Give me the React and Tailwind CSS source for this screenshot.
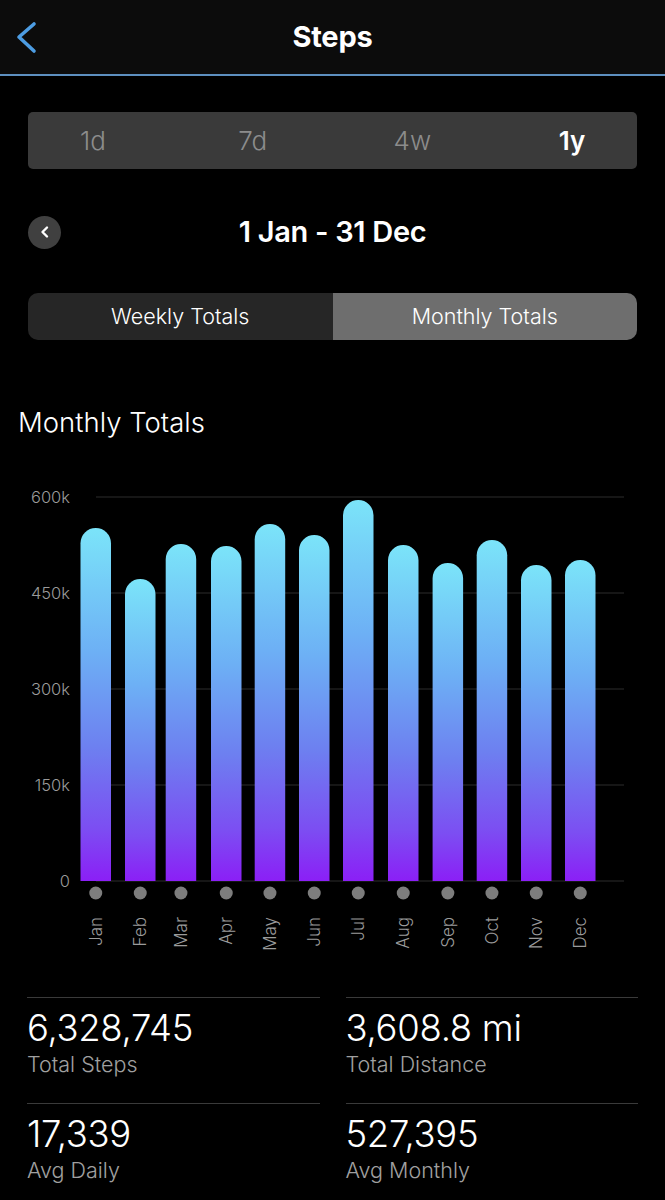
import React from "react";

const months = [
  { m: "Jan", x: 80.5, top: 528 },
  { m: "Feb", x: 125, top: 579 },
  { m: "Mar", x: 165.7, top: 544 },
  { m: "Apr", x: 211, top: 546 },
  { m: "May", x: 254.7, top: 524 },
  { m: "Jun", x: 299, top: 535 },
  { m: "Jul", x: 343, top: 500 },
  { m: "Aug", x: 388, top: 545 },
  { m: "Sep", x: 432.6, top: 563 },
  { m: "Oct", x: 476.7, top: 540 },
  { m: "Nov", x: 521, top: 565 },
  { m: "Dec", x: 565, top: 560 },
];

const OFF = 480;
const BW = 30.5;

function Chart() {
  const grid = [
    { y: 497, l: "600k" },
    { y: 593, l: "450k" },
    { y: 689, l: "300k" },
    { y: 785, l: "150k" },
    { y: 881, l: "0" },
  ];
  const base = 881 - OFF;
  return (
    <svg width="665" height="480" viewBox="0 0 665 480" className="block">
      <defs>
        <linearGradient id="barg" x1="0" y1="0" x2="0" y2="1">
          <stop offset="0" stopColor="#7be4f9" />
          <stop offset="0.35" stopColor="#6db0f5" />
          <stop offset="0.62" stopColor="#6d80f0" />
          <stop offset="0.85" stopColor="#7c4ef2" />
          <stop offset="1" stopColor="#8b1ff6" />
        </linearGradient>
      </defs>
      {grid.map((g) => (
        <g key={g.l}>
          <line x1="96" x2="624" y1={g.y - OFF} y2={g.y - OFF} stroke="#2c2c2c" strokeWidth="1.2" />
          <text
            x="70"
            y={g.y - OFF + 6}
            textAnchor="end"
            fill="#9b9b9b"
            fontSize="16.5"
            fontWeight="300"
            fontFamily="Inter, 'Noto Sans', sans-serif"
          >
            {g.l}
          </text>
        </g>
      ))}
      {months.map((d) => {
        const t = d.top - OFF;
        const r = BW / 2;
        const x = d.x;
        const path = `M${x},${base} L${x},${t + r} A${r},${r} 0 0 1 ${x + BW},${t + r} L${x + BW},${base} Z`;
        const cx = x + BW / 2;
        return (
          <g key={d.m}>
            <path d={path} fill="url(#barg)" />
            <circle cx={cx} cy={893 - OFF} r="6.5" fill="#7d7d7d" />
            <text
              transform={`translate(${cx + 6}, ${917 - OFF}) rotate(-90)`}
              textAnchor="end"
              fill="#9b9b9b"
              fontSize="17"
              fontWeight="300"
              fontFamily="Inter, 'Noto Sans', sans-serif"
            >
              {d.m}
            </text>
          </g>
        );
      })}
    </svg>
  );
}

function Stat({ value, label }) {
  return (
    <div className="border-t border-[#3a3a3a] pt-[10px] pb-[26px]">
      <div className="text-[36.5px] leading-[40px] font-light text-white tracking-[-0.3px]">{value}</div>
      <div className="text-[21.5px] leading-[26px] font-light text-[#a0a0a0] mt-[3px]">{label}</div>
    </div>
  );
}

export default function App() {
  return (
    <div
      className="w-[665px] min-h-[1200px] bg-black text-white"
      style={{ fontFamily: "Inter, 'Noto Sans', sans-serif" }}
    >
      <header className="h-[76px] bg-[#0c0c0c] border-b-2 border-[#5d8fbf] grid grid-cols-[80px_1fr_80px] items-center">
        <div className="pl-[15px] flex items-center">
          <svg width="24" height="34" viewBox="0 0 24 34">
            <polyline
              points="19,4 4,17 19,31"
              fill="none"
              stroke="#4d9de3"
              strokeWidth="3.6"
              strokeLinecap="round"
              strokeLinejoin="round"
            />
          </svg>
        </div>
        <div className="text-center text-[29px] font-bold tracking-[-0.2px]">Steps</div>
        <div />
      </header>

      <div className="mx-[28px] mt-[36px] h-[57px] rounded-[5px] bg-[#3a3a3a] flex items-center justify-between px-[35px]">
        <span className="w-[60px] text-center text-[26px] font-light text-[#8c8c8c]">1d</span>
        <span className="w-[60px] text-center text-[26px] font-light text-[#8c8c8c]">7d</span>
        <span className="w-[60px] text-center text-[26px] font-light text-[#8c8c8c]">4w</span>
        <span className="w-[60px] text-center text-[26px] font-semibold text-white">1y</span>
      </div>

      <div className="mx-[28px] mt-[46px] h-[34px] grid grid-cols-[34px_1fr_34px] items-center">
        <div className="w-[33px] h-[33px] rounded-full bg-[#404040] flex items-center justify-center">
          <svg width="12" height="14" viewBox="0 0 12 14">
            <polyline
              points="8,2.5 3.5,7 8,11.5"
              fill="none"
              stroke="#ffffff"
              strokeWidth="2.4"
              strokeLinecap="round"
              strokeLinejoin="round"
            />
          </svg>
        </div>
        <div className="text-center text-[29px] leading-[34px] font-semibold tracking-[-0.3px]">1 Jan - 31 Dec</div>
        <div />
      </div>

      <div className="mx-[28px] mt-[44px] h-[47px] rounded-[10px] overflow-hidden grid grid-cols-2">
        <div className="bg-[#262626] flex items-center justify-center text-[21.5px] font-light">Weekly Totals</div>
        <div className="bg-[#6e6e6e] flex items-center justify-center text-[21.5px] font-light">Monthly Totals</div>
      </div>

      <div className="px-[18px] mt-[66px] text-[27.5px] leading-[32px] font-light">Monthly Totals</div>

      <div className="mt-[42px]">
        <Chart />
      </div>

      <div className="mt-[37px] px-[27px] grid grid-cols-2 gap-x-[26px]">
        <Stat value="6,328,745" label="Total Steps" />
        <Stat value="3,608.8 mi" label="Total Distance" />
        <Stat value="17,339" label="Avg Daily" />
        <Stat value="527,395" label="Avg Monthly" />
      </div>
    </div>
  );
}
